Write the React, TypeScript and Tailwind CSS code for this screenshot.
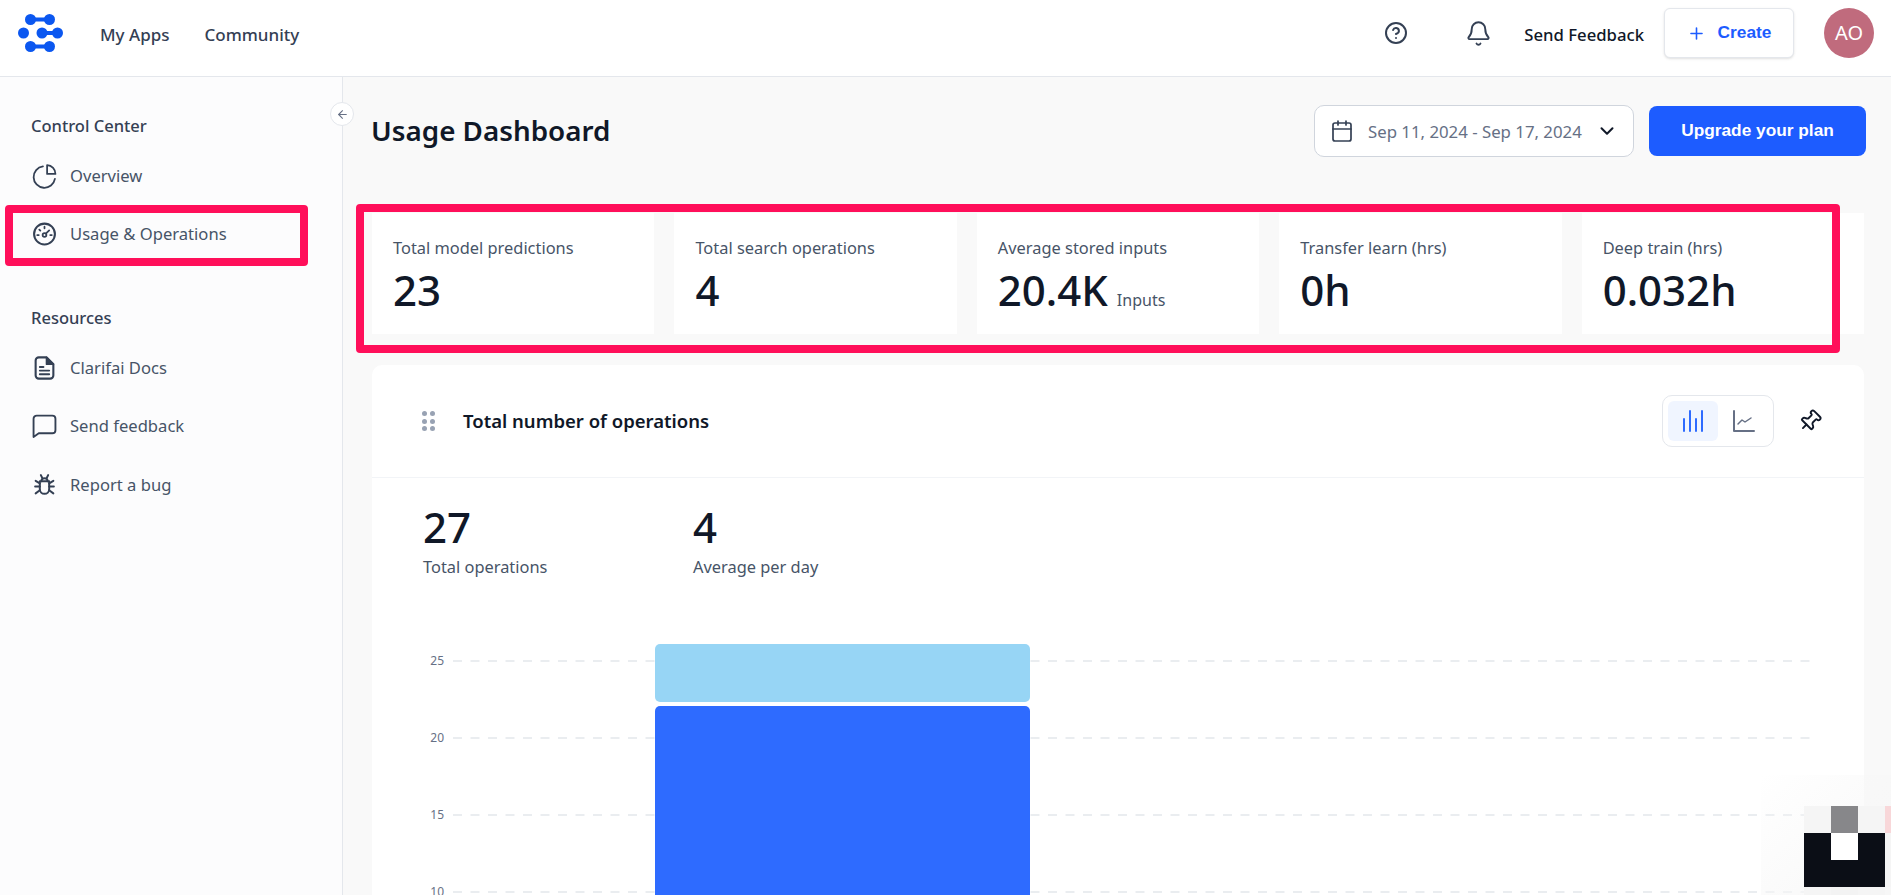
import { ArrowLeft, Bell, Calendar, ChevronDown, CircleHelp, Pin, Plus } from "lucide-react";

const SANS = "font-['Noto_Sans','Open_Sans',sans-serif]";

function Logo() {
  return (
    <svg width="46" height="38" viewBox="0 0 46 38" fill="#0b57f0" stroke="none">
      <circle cx="12.500" cy="5.500" r="5.500" />
      <circle cx="31.500" cy="5.500" r="5.500" />
      <rect x="12" y="3.500" width="20" height="4" />
      <circle cx="5.500" cy="19" r="5.500" />
      <circle cx="24" cy="19" r="5.500" />
      <circle cx="39.500" cy="19" r="5.500" />
      <rect x="24" y="17" width="16" height="4" />
      <circle cx="12.500" cy="32.500" r="5.500" />
      <circle cx="31.500" cy="32.500" r="5.500" />
      <rect x="12" y="30.500" width="20" height="4" />
    </svg>
  );
}

function Ico({ children }: { children: React.ReactNode }) {
  return (
    <svg width="26" height="26" viewBox="0 0 24 24" fill="none" stroke="#344054" strokeWidth="1.700" strokeLinecap="round" strokeLinejoin="round">
      {children}
    </svg>
  );
}

const OverviewIcon = () => (
  <Ico>
    <path d="M10.500 2.800a10.300 10.300 0 1 0 11.500 12" />
    <path d="M14.500 1.500a8.300 8.300 0 0 1 8 8.500h-8z" />
  </Ico>
);
const GaugeIcon = () => (
  <Ico>
    <circle cx="12" cy="12" r="10" strokeWidth="2" />
    <circle cx="12" cy="13" r="1.800" />
    <path d="M13.500 11.500l3-3M12 5v1.500M5 13h1.500M17.500 13H19M7 7.800l1 1" />
  </Ico>
);
const DocIcon = () => (
  <Ico>
    <path d="M14 1.800H6.500a3 3 0 0 0-3 3v14.400a3 3 0 0 0 3 3h11a3 3 0 0 0 3-3V8.300z" strokeWidth="2" />
    <path d="M14 1.800v6.500h6.500z" fill="#344054" />
    <path d="M7.500 11h3.500M7.500 14.500h9M7.500 18h9" strokeWidth="1.800" />
  </Ico>
);
const ChatIcon = () => (
  <Ico>
    <path d="M1.500 22.500V5a3 3 0 0 1 3-3h15a3 3 0 0 1 3 3v11a3 3 0 0 1-3 3H6.500z" strokeWidth="1.800" />
  </Ico>
);
const BugIcon = () => (
  <Ico>
    <path d="M7.500 8.500h9v7.500a4.500 4.500 0 0 1-9 0z" strokeWidth="1.900" />
    <path d="M9 8.500a3 3 0 0 1 6 0M8.500 2.500l1.500 3M15.500 2.500l-1.500 3M3 13.500h4.500M16.500 13.500H21M3.500 8l4 2.500M20.500 8l-4 2.500M3.500 20l4-3M20.500 20l-4-3" strokeWidth="1.900" />
  </Ico>
);

function NavItem({ icon, label, className = "" }: { icon: React.ReactNode; label: string; className?: string }) {
  return (
    <div className={`flex items-center gap-[13px] h-[26px] pl-[32px] text-[16.6px] text-[#475467] ${className}`}>
      <span className="w-[25px] flex justify-center">{icon}</span>
      <span>{label}</span>
    </div>
  );
}

function StatCard({ label, value, unit }: { label: string; value: string; unit?: string }) {
  return (
    <div className="flex-1 h-[121px] bg-white pl-[21px] pt-[23px]">
      <div className="text-[16.4px] leading-[24px] text-[#475467]">{label}</div>
      <div className="flex items-baseline gap-[9px] mt-[4px]">
        <span className="text-[42px] leading-[52px] font-medium text-[#101828]">{value}</span>
        {unit && <span className="text-[16px] text-[#475467]">{unit}</span>}
      </div>
    </div>
  );
}

function Chart() {
  const rows = [
    { y: 33, t: "25" },
    { y: 110, t: "20" },
    { y: 187, t: "15" },
    { y: 264, t: "10" },
  ];
  return (
    <svg width="1492" height="300" viewBox="0 0 1492 300" className="block">
      {rows.map((r) => (
        <g key={r.t}>
          <line x1="81" x2="1438" y1={r.y} y2={r.y} stroke="#e4e7ec" strokeWidth="1.500" strokeDasharray="9 8.500" />
          <text x="72" y={r.y + 4} textAnchor="end" fontSize="12" fill="#667085" fontFamily="Noto Sans, sans-serif">
            {r.t}
          </text>
        </g>
      ))}
      <rect x="283" y="16" width="375" height="58" rx="5" fill="#97d5f5" />
      <rect x="283" y="78" width="375" height="230" rx="5" fill="#2e6bff" />
    </svg>
  );
}

export default function App() {
  return (
    <div className={`relative w-[1891px] h-[895px] overflow-hidden bg-[#f9f9f9] ${SANS}`}>
      <header className="h-[77px] bg-white border-b border-[#e4e7ec] flex items-center pl-[18px] pr-[17px] pb-[10px]">
        <Logo />
        <nav className="flex items-center gap-[35px] ml-[36px] mt-[3px] text-[17px] font-medium text-[#344054]">
          <span>My Apps</span>
          <span>Community</span>
        </nav>
        <div className="ml-auto flex items-center">
          <CircleHelp size={24} strokeWidth={2} className="text-[#344054]" />
          <Bell size={27} strokeWidth={1.7} className="text-[#344054] ml-[57px]" />
          <span className="ml-[32px] mt-[3px] text-[16.7px] font-medium text-[#101828]">Send Feedback</span>
          <button className="ml-[20px] w-[130px] h-[50px] bg-white border border-[#e4e7ec] rounded-[6px] shadow-sm flex items-center justify-center gap-[12px] text-[#1d5cff] font-['Liberation_Sans',sans-serif] font-bold text-[17.3px]">
            <Plus size={19} strokeWidth={2} />
            Create
          </button>
          <div className="ml-[30px] w-[50px] h-[50px] rounded-full bg-[#c06b7d] text-white text-[20px] flex items-center justify-center">AO</div>
        </div>
      </header>

      <div className="flex h-[818px]">
        <aside className="relative w-[343px] shrink-0 bg-[#fcfcfd] border-r border-[#e4e7ec] pt-[37px]">
          <div className="pl-[31px] text-[16.5px] font-medium text-[#344054] leading-[24px]">Control Center</div>
          <NavItem className="mt-[25px]" icon={<OverviewIcon />} label="Overview" />
          <NavItem className="mt-[32px]" icon={<GaugeIcon />} label="Usage & Operations" />
          <div className="mt-[59px] pl-[31px] text-[16.5px] font-medium text-[#344054] leading-[24px]">Resources</div>
          <NavItem className="mt-[25px]" icon={<DocIcon />} label="Clarifai Docs" />
          <NavItem className="mt-[32px]" icon={<ChatIcon />} label="Send feedback" />
          <NavItem className="mt-[33px]" icon={<BugIcon />} label="Report a bug" />
          <div className="absolute left-[330px] top-[25px] w-[24px] h-[24px] rounded-full bg-white border border-[#e4e7ec] flex items-center justify-center z-10">
            <ArrowLeft size={13} className="text-[#667085]" />
          </div>
        </aside>

        <main className="flex-1 pl-[29px] pr-[27px] min-w-0">
          <div className="flex items-center h-[52px] mt-[28px]">
            <h1 className="-ml-[1px] text-[27.8px] font-semibold text-[#101828]">Usage Dashboard</h1>
            <button className="ml-auto w-[320px] h-[52px] bg-white border border-[#d0d5dd] rounded-[10px] flex items-center pl-[15px] text-[16.8px] text-[#667085]">
              <Calendar size={24} strokeWidth={1.7} className="text-[#344054]" />
              <span className="ml-[14px] mt-[1px]">Sep 11, 2024 - Sep 17, 2024</span>
              <ChevronDown size={22} strokeWidth={2.2} className="text-[#101828] ml-[14px]" />
            </button>
            <button className="ml-[15px] -mr-[2px] w-[217px] h-[50px] bg-[#1d5cff] rounded-[8px] text-white font-['Liberation_Sans',sans-serif] font-bold text-[17.3px]">
              Upgrade your plan
            </button>
          </div>

          <div className="flex gap-[20px] mt-[56px]">
            <StatCard label="Total model predictions" value="23" />
            <StatCard label="Total search operations" value="4" />
            <StatCard label="Average stored inputs" value="20.4K" unit="Inputs" />
            <StatCard label="Transfer learn (hrs)" value="0h" />
            <StatCard label="Deep train (hrs)" value="0.032h" />
          </div>

          <section className="mt-[31px] bg-white rounded-[10px]">
            <div className="h-[113px] border-b border-[#f2f4f7] flex items-center pl-[50px] pr-[42px]">
              <div className="grid grid-cols-2 gap-x-[3px] gap-y-[2.500px]">
                {[0, 1, 2, 3, 4, 5].map((i) => (
                  <span key={i} className="w-[5px] h-[5px] rounded-full bg-[#98a2b3]" />
                ))}
              </div>
              <h2 className="ml-[28px] text-[18.5px] font-semibold text-[#101828]">Total number of operations</h2>
              <div className="ml-auto w-[112px] h-[52px] border border-[#e4e7ec] rounded-[10px] flex items-center px-[5px]">
                <div className="w-[50px] h-[40px] rounded-[6px] bg-[#f0f5ff] flex items-center justify-center">
                  <svg width="24" height="24" viewBox="0 0 24 24" stroke="#2e6bff" strokeWidth="2" strokeLinecap="round">
                    <path d="M3 22V10M9 22V2M15 22V10M21 22V2" />
                  </svg>
                </div>
                <div className="w-[50px] h-[40px] flex items-center justify-center pl-[2px]">
                  <svg width="24" height="24" viewBox="0 0 24 24" fill="none" stroke="#667085" strokeWidth="2" strokeLinecap="round" strokeLinejoin="round">
                    <path d="M2 2v20h20" />
                    <path d="M6 15l4-4 3 2 6-4" strokeWidth="1.500" />
                  </svg>
                </div>
              </div>
              <Pin size={24} strokeWidth={1.9} className="ml-[24px] text-[#101828] rotate-45" />
            </div>
            <div className="flex pl-[51px] pt-[23px] h-[150px]">
              <div className="w-[270px]">
                <div className="text-[42px] leading-[52px] font-medium text-[#101828]">27</div>
                <div className="text-[16.4px] leading-[24px] text-[#475467] mt-[2px]">Total operations</div>
              </div>
              <div>
                <div className="text-[42px] leading-[52px] font-medium text-[#101828]">4</div>
                <div className="text-[16.4px] leading-[24px] text-[#475467] mt-[2px]">Average per day</div>
              </div>
            </div>
            <Chart />
          </section>
        </main>
      </div>

      {/* Annotation frames */}
      <div className="absolute left-[5px] top-[205px] w-[303px] h-[61px] border-[8px] border-[#ff0f5a] rounded-[4px]" />
      <div className="absolute left-[356px] top-[204px] w-[1484px] h-[149px] border-[8px] border-[#ff0f5a] rounded-[4px]" />

      {/* Pixelated corner overlay */}
      <div className="absolute right-0 bottom-0 w-[130px] h-[120px] bg-gradient-to-br from-transparent to-[#f7f7f7]" />
      <div className="absolute left-[1804px] top-[806px] grid grid-cols-[27px_27px_27px_6px] grid-rows-[27px_27px_27px_8px]">
        <div className="bg-[#f5f5f5]" />
        <div className="bg-[#87878a]" />
        <div className="bg-[#f5f5f5]" />
        <div className="bg-[#f8d7d9]" />
        <div className="bg-[#0b0e16]" />
        <div className="bg-white" />
        <div className="bg-[#0b0e16]" />
        <div className="bg-[#f5f5f5]" />
        <div className="bg-[#0b0e16]" />
        <div className="bg-[#0b0e16]" />
        <div className="bg-[#0b0e16]" />
        <div className="bg-[#f5f5f5]" />
        <div className="bg-[#f5f5f5]" />
        <div className="bg-[#f3f3f3]" />
        <div className="bg-[#f5f5f5]" />
        <div className="bg-[#f7f7f7]" />
      </div>
    </div>
  );
}
